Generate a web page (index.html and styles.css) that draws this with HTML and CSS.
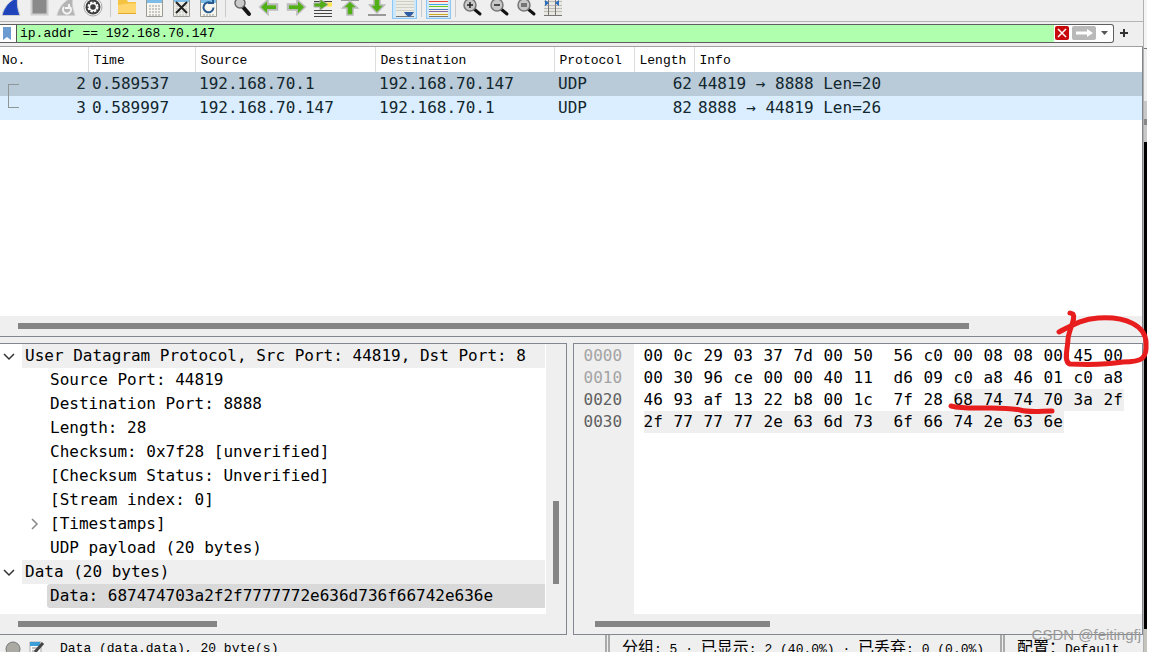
FILE: index.html
```html
<!DOCTYPE html>
<html lang="zh-CN">
<head>
<meta charset="utf-8">
<title>Wireshark</title>
<link rel="stylesheet" href="styles.css">
</head>
<body>
<div class="screen">
<main class="app">
  <div class="toolbar" role="toolbar" aria-label="Main toolbar">
    <button class="tool" aria-label="Start capture"><svg viewBox="0 0 25 21"><path d="M2 15.500C4 7 9 1 18 -3Q16 5 20 15.500Z" fill="#2148c0" stroke="#d0d0d0"/><path d="M4 14C7 7 10 4 15 1Q15 8 17 14Z" fill="#1f43b8"/></svg></button>
    <button class="tool" aria-label="Stop capture"><svg viewBox="0 0 25 21"><path d="M4.500 -2h16v16.500h-16z" fill="#8a8a8a" stroke="#cfcfcf" stroke-width="2"/></svg></button>
    <button class="tool" aria-label="Restart capture"><svg viewBox="0 0 25 21"><path d="M3 15.500C5 7 10 1 19 -3Q17 5 21 15.500Z" fill="#b5b5b5" stroke="#d2d2d2"/><path d="M10 7a4 4 0 1 0 6 0M15 4v4h-4" fill="none" stroke="#f5f5f5" stroke-width="2"/></svg></button>
    <button class="tool" aria-label="Capture options"><svg viewBox="0 0 25 21"><circle cx="12" cy="7" r="9" fill="#f4f4f4" stroke="#aaa"/><circle cx="12" cy="7" r="7.500" fill="#3c3c3c"/><circle cx="12" cy="7" r="4.500" fill="none" stroke="#fff" stroke-width="2" stroke-dasharray="2.300 1.250"/><circle cx="12" cy="7" r="3.500" fill="#3c3c3c" stroke="#fff" stroke-width="1.500"/></svg></button>
    <span class="sep"></span>
    <button class="tool" aria-label="Open file"><svg viewBox="0 0 25 21"><path d="M3 -2h8l2 4h8v11.500H3z" fill="#f5c342"/><path d="M3 5l10-1.500h8v10H3z" fill="#ffd66d"/><path d="M3 13.500h18" stroke="#e4ac2d"/></svg></button>
    <button class="tool" aria-label="Save file"><svg viewBox="0 0 25 21"><path d="M4.500-2h16v18.500h-16z" fill="#f7f7ef" stroke="#9a9a94"/><path d="M5 0h15v3H5z" fill="#7dbde8"/><path d="M7 6h12M7 9h12M7 12h12M7 15h12" stroke="#999" stroke-dasharray="2 1"/></svg></button>
    <button class="tool" aria-label="Close file"><svg viewBox="0 0 25 21"><path d="M4.500-2h16v18.500h-16z" fill="#ecece4" stroke="#9a9a94"/><path d="M5 0h15v2H5z" fill="#7dbde8"/><path d="M7 6h12M7 9h12M7 12h12M7 15h12" stroke="#bbb" stroke-dasharray="2 1"/><path d="M7 2l11 11M18 2L7 13" stroke="#222" stroke-width="2"/></svg></button>
    <button class="tool" aria-label="Reload file"><svg viewBox="0 0 25 21"><path d="M4.500-2h16v18.500h-16z" fill="#f7f7ef" stroke="#9a9a94"/><path d="M5 0h15v3H5z" fill="#7dbde8"/><path d="M7 15h12" stroke="#999" stroke-dasharray="2 1"/><path d="M15 3a5 5 0 1 0 2.500 4.500M12 3h5v-3" fill="none" stroke="#28598f" stroke-width="2"/></svg></button>
    <span class="sep"></span>
    <button class="tool" aria-label="Find packet"><svg viewBox="0 0 25 21"><path d="M13 7l6 7" stroke="#161616" stroke-width="4" stroke-linecap="round"/><circle cx="10" cy="3" r="5" fill="#cacaca" stroke="#686868" stroke-width="1.500"/></svg></button>
    <button class="tool" aria-label="Previous packet"><svg viewBox="0 0 25 21"><path d="M3.500 7l7-6.500v4H20v5h-9.500v4z" fill="#53ae17" stroke="#bbb" stroke-width="2.500"/><path d="M4 7l6-5.500v4H19v3.500h-9v4z" fill="#51b015"/></svg></button>
    <button class="tool" aria-label="Next packet"><svg viewBox="0 0 25 21"><path d="M20.500 7l-7-6.500v4H4v5h9.500v4z" fill="#53ae17" stroke="#bbb" stroke-width="2.500"/><path d="M20 7l-6-5.500v4H5v3.500h9v4z" fill="#51b015"/></svg></button>
    <button class="tool" aria-label="Go to packet"><svg viewBox="0 0 25 21"><path d="M3 1.500h18M3 10.500h18M3 13.500h18M3 16.500h18" stroke="#444"/><path d="M13 2.500h8v4h-8z" fill="#ffe34c"/><path d="M3 3h6V-1l8 5.500-8 5.500V7H3z" fill="#53ae17" stroke="#aaa"/></svg></button>
    <button class="tool" aria-label="First packet"><svg viewBox="0 0 25 21"><path d="M3 .500h18" stroke="#999"/><path d="M12 1L4.500 8H9v7h6V8h4.500z" fill="#51b015" stroke="#bbb" stroke-width="1.500"/></svg></button>
    <button class="tool" aria-label="Last packet"><svg viewBox="0 0 25 21"><path d="M3 15h18" stroke="#999" stroke-width="2"/><path d="M12 13L4.500 5H9V-1h6v6h4.500z" fill="#51b015" stroke="#bbb" stroke-width="1.500"/></svg></button>
    <button class="tool on" aria-label="Auto scroll"><svg viewBox="0 0 25 21"><path d="M4 0h18v17H4z" fill="#ecece6"/><path d="M4 1.500h18M4 4.500h18M4 7.500h18M4 10.500h18" stroke="#cfcfc6"/><path d="M4 16.500h18" stroke="#777"/><path d="M12 12h10q-2 4-5 5-3-1-5-5z" fill="#2d5da5"/></svg></button>
    <span class="sep"></span>
    <button class="tool on" aria-label="Colorize"><svg viewBox="0 0 25 21"><path d="M3 0h19v17H3z" fill="#f1f1e8"/><path d="M3 1.500h19" stroke="#ef4545"/><path d="M3 4.500h19" stroke="#3da5e7"/><path d="M3 6.500h19" stroke="#63c928"/><path d="M3 9.500h19" stroke="#4c79be"/><path d="M3 11.500h19" stroke="#8c64a0"/><path d="M3 14.500h19" stroke="#d1a61f"/><path d="M3 16.500h19" stroke="#777"/></svg></button>
    <span class="sep"></span>
    <button class="tool" aria-label="Zoom in"><svg viewBox="0 0 25 21"><path d="M14 9l6 5" stroke="#111" stroke-width="3" stroke-linecap="round"/><circle cx="10" cy="5" r="6" fill="#c8c8c8" stroke="#777" stroke-width="1.500"/><path d="M7 5h6M10 2v6" stroke="#222" stroke-width="1.500"/></svg></button>
    <button class="tool" aria-label="Zoom out"><svg viewBox="0 0 25 21"><path d="M14 9l6 5" stroke="#111" stroke-width="3" stroke-linecap="round"/><circle cx="10" cy="5" r="6" fill="#c8c8c8" stroke="#777" stroke-width="1.500"/><path d="M7 5h6" stroke="#222" stroke-width="1.500"/></svg></button>
    <button class="tool" aria-label="Normal size"><svg viewBox="0 0 25 21"><path d="M14 9l6 5" stroke="#111" stroke-width="3" stroke-linecap="round"/><circle cx="10" cy="5" r="6" fill="#c8c8c8" stroke="#777" stroke-width="1.500"/><path d="M7 4h6M7 6h6" stroke="#222" stroke-width="1.200"/></svg></button>
    <button class="tool" aria-label="Resize columns"><svg viewBox="0 0 25 21"><path d="M3 0h18v16H3z" fill="#e8e8e0"/><path d="M3 1.500h18M3 5.500h18M3 8.500h18M3 11.500h18" stroke="#bbb"/><path d="M3 15.500h18M7.500 0v15M14.500 0v15" stroke="#777"/><path d="M4 0l4 3-4 3zM18 0l-4 3 4 3z" fill="#286bc0"/></svg></button>
  </div>

  <form class="filter">
    <div class="filter-box">
      <button class="mark" type="button" aria-label="Bookmarks"><svg viewBox="0 0 16 17"><path d="M3 2h8v13l-4-3-4 3z" fill="#6b9bd1"/></svg></button>
      <input class="filter-input" type="text" aria-label="Display filter" value="ip.addr == 192.168.70.147" spellcheck="false">
      <button class="clear" type="button" aria-label="Clear filter"><svg viewBox="0 0 14 14"><path d="M3 3l8 8M11 3l-8 8" stroke="#fff" stroke-width="1.500"/></svg></button>
      <button class="apply" type="button" aria-label="Apply filter"><svg viewBox="0 0 24 14"><path d="M4 5.500h11V3l6 4-6 4V8.500H4z" fill="#fff"/></svg></button>
      <button class="drop" type="button" aria-label="Recent filters"><svg viewBox="0 0 17 14"><path d="M5 5h7l-3.500 4z" fill="#555"/></svg></button>
    </div>
    <button class="add" type="button" aria-label="Add filter button"><svg viewBox="0 0 10 10"><path d="M5 1v8M1 5h8" stroke="#333" stroke-width="2"/></svg></button>
  </form>

  <section class="work">
    <div class="packets">
      <div class="list">
        <table class="table">
          <colgroup><col class="c-no"><col class="c-time"><col class="c-addr"><col class="c-addr"><col class="c-proto"><col class="c-len"><col></colgroup>
          <thead><tr><th>No.</th><th>Time</th><th>Source</th><th>Destination</th><th>Protocol</th><th>Length</th><th>Info</th></tr></thead>
          <tbody>
            <tr class="row-sel"><td><div class="no"><span class="link first"></span>2</div></td><td>0.589537</td><td>192.168.70.1</td><td>192.168.70.147</td><td>UDP</td><td class="num">62</td><td>44819 → 8888 Len=20</td></tr>
            <tr class="row-udp"><td><div class="no"><span class="link last"></span>3</div></td><td>0.589997</td><td>192.168.70.147</td><td>192.168.70.1</td><td>UDP</td><td class="num">82</td><td>8888 → 44819 Len=26</td></tr>
          </tbody>
        </table>
      </div>
      <div class="hbar"><span class="thumb wide"></span></div>
    </div>

    <div class="panes">
      <div class="pane details">
        <div class="details-body">
          <ul class="tree">
            <li class="branch"><svg class="chev" viewBox="0 0 22 24"><path d="M4 10l5 5 5-5" fill="none" stroke="#333" stroke-width="1.500"/></svg><span class="label shade">User Datagram Protocol, Src Port: 44819, Dst Port: 8</span></li>
            <li class="leaf">Source Port: 44819</li>
            <li class="leaf">Destination Port: 8888</li>
            <li class="leaf">Length: 28</li>
            <li class="leaf">Checksum: 0x7f28 [unverified]</li>
            <li class="leaf">[Checksum Status: Unverified]</li>
            <li class="leaf">[Stream index: 0]</li>
            <li class="branch sub"><svg class="chev" viewBox="0 0 22 24"><path d="M7 7l5 5-5 5" fill="none" stroke="#888" stroke-width="1.500"/></svg><span class="label">[Timestamps]</span></li>
            <li class="leaf">UDP payload (20 bytes)</li>
            <li class="branch"><svg class="chev" viewBox="0 0 22 24"><path d="M4 10l5 5 5-5" fill="none" stroke="#333" stroke-width="1.500"/></svg><span class="label shade">Data (20 bytes)</span></li>
            <li class="leaf"><span class="picked">Data: 687474703a2f2f7777772e636d736f66742e636e</span></li>
          </ul>
          <div class="vbar"><span class="vthumb"></span></div>
        </div>
        <div class="hbar"><span class="thumb short"></span></div>
      </div>

      <div class="pane bytes">
        <div class="bytes-body">
          <div class="offsets"><span>0000</span><span>0010</span><span class="dark">0020</span><span class="dark">0030</span></div>
          <div class="hex">
            <span>00</span><span>0c</span><span>29</span><span>03</span><span>37</span><span>7d</span><span>00</span><span>50</span><span>56</span><span>c0</span><span>00</span><span>08</span><span>08</span><span>00</span><span>45</span><span>00</span>
            <span>00</span><span>30</span><span>96</span><span>ce</span><span>00</span><span>00</span><span>40</span><span>11</span><span>d6</span><span>09</span><span>c0</span><span>a8</span><span>46</span><span>01</span><span>c0</span><span>a8</span>
            <span>46</span><span>93</span><span>af</span><span>13</span><span>22</span><span>b8</span><span>00</span><span>1c</span><span>7f</span><span>28</span><span class="hl">68</span><span class="hl">74</span><span class="hl">74</span><span class="hl">70</span><span class="hl">3a</span><span class="hl end">2f</span>
            <span class="hl">2f</span><span class="hl">77</span><span class="hl">77</span><span class="hl">77</span><span class="hl">2e</span><span class="hl">63</span><span class="hl">6d</span><span class="hl">73</span><span class="hl">6f</span><span class="hl">66</span><span class="hl">74</span><span class="hl">2e</span><span class="hl">63</span><span class="hl end">6e</span>
          </div>
        </div>
        <div class="hbar"><span class="thumb mid"></span></div>
        <svg class="ink" viewBox="0 0 204 110" aria-hidden="true"><path d="M113 20C125 14 135 7 152 6C180 4 200 14 200 31C201 46 197 50 177 50C158 53 145 53 124 52C117 50 122 35 122 27C123 17 130 7 127 2L124 1" /><path d="M5 94C25 99 48 93 74 98C85 101 95 99 106 99"/></svg>
      </div>
    </div>
  </section>

  <footer class="status">
    <div class="status-left">
      <svg class="dot" viewBox="0 0 16 16"><circle cx="8" cy="8" r="7" fill="#aaa9a2" stroke="#777"/></svg>
      <svg class="note" viewBox="0 0 16 16"><path d="M1 1h11v15H1z" fill="#fafafa" stroke="#aaa"/><path d="M1 1h10v4H1z" fill="#3c9ed8"/><path d="M3 7h5M3 10h3" stroke="#888"/><path d="M14 2L6 11" stroke="#444" stroke-width="3"/></svg>
      <span>Data (data.data), 20 byte(s)</span>
    </div>
    <div class="status-mid"><span class="han">分组</span>: 5 · <span class="han">已显示</span>: 2 (40.0%) · <span class="han">已丢弃</span>: 0 (0.0%)</div>
    <div class="status-right"><span class="han">配置：</span>Default</div>
  </footer>
</main>
<div class="behind"><span class="behind-top"></span><span class="behind-mid"></span><span class="behind-black"></span><span class="behind-end"></span></div>
<div class="watermark">CSDN @feitingfj</div>
</div>
</body>
</html>
```
FILE: styles.css
```css
* { box-sizing: border-box; }

body {
  margin: 0;
  background: #fff;
  color: #000;
  font-family: "Liberation Mono", "Noto Sans CJK SC", monospace;
  font-size: 13px;
}

button { padding: 0; border: 0; background: none; }
svg { display: block; }

.screen {
  position: relative;
  display: flex;
  height: 100vh;
  padding-right: 4px;
  overflow: hidden;
}

.app {
  display: flex;
  flex: 1;
  flex-direction: column;
  min-width: 0;
  background: #efefef;
}

/* Toolbar */
.toolbar {
  display: flex;
  gap: 2px;
  height: 22px;
  border-bottom: 1px solid #b4b4b4;
}
.tool { width: 25px; height: 19px; overflow: hidden; }
.tool svg { width: 25px; height: 21px; }
.tool.on { background: #cce6fa; border: 1px solid #8cc8f5; border-top: 0; }
.tool.on svg { margin-left: -1px; }
.sep { width: 5px; height: 17px; margin-right: 2px; margin-left: -2px; border-right: 1px solid #cacaca; }

/* Display filter */
.filter {
  display: flex;
  align-items: center;
  height: 25px;
  padding-bottom: 2px;
  border-bottom: 1px solid #a0a0a0;
}
.filter-box {
  display: flex;
  flex: 1;
  align-items: center;
  height: 19px;
  border: 1px solid #5f5f5f;
  border-left: 0;
  border-radius: 0 3px 3px 0;
  background: #fff;
}
.mark { width: 17px; height: 17px; border-right: 1px solid #555; }
.mark svg { width: 16px; height: 17px; }
.filter-input {
  flex: 1;
  min-width: 0;
  height: 17px;
  padding: 0 3px;
  border: 0;
  background: #afffaf;
  color: #000;
  font: 13px "Liberation Mono", monospace;
}
.clear { width: 14px; height: 14px; margin-left: 1px; border-radius: 2px; background: #c80a0a; }
.apply { width: 24px; height: 14px; margin-left: 3px; border-radius: 2px; background: #b9b9b9; }
.drop { width: 17px; height: 14px; }
.add { width: 29px; padding-left: 1px; }
.add svg { width: 10px; height: 10px; }
.filter { gap: 4px; }

/* Work area */
.work { display: flex; flex: 1; flex-direction: column; gap: 6px; min-height: 0; margin-right: 4px; }
.packets {
  display: flex;
  flex: 290 1 0;
  flex-direction: column;
  min-height: 0;
  border-right: 1px solid #828790;
  border-bottom: 1px solid #828790;
}
.list { flex: 1; overflow: hidden; background: #fff; }

.table { width: 100%; border-collapse: collapse; table-layout: fixed; }
.c-no { width: 88px; }
.c-time { width: 107px; }
.c-addr { width: 180px; }
.c-addr + .c-addr { width: 179px; }
.c-proto { width: 80px; }
.c-len { width: 60px; }
.table th {
  height: 25px;
  padding: 2px 0 0 5px;
  border-left: 1px solid #dcdcdc;
  font-weight: 400;
  text-align: left;
}
.table th:first-child { padding-left: 2px; border-left: 0; }
.table td {
  height: 24px;
  padding: 0 2px 0 4px;
  color: #12272e;
  line-height: 24px;
  white-space: nowrap;
}
.table td, .tree, .bytes-body {
  font-family: "DejaVu Sans Mono", monospace;
  font-size: 16px;
}
.table .num { text-align: right; }
.row-sel { background: #b9cad8; }
.row-udp { background: #daeeff; }
.no { display: flex; justify-content: space-between; height: 24px; padding-left: 4px; }
.link { width: 11px; height: 12px; border-left: 1px solid #8e9698; }
.first { align-self: flex-end; border-top: 1px solid #8e9698; }
.last { border-bottom: 1px solid #8e9698; }

/* Scroll bars */
.hbar { flex: none; height: 20px; padding: 7px 18px; background: #efefef; }
.thumb { display: block; height: 6px; background: #858585; }
.wide { width: 86%; }
.short { width: 199px; }
.mid { width: 175px; margin-left: 3px; }
.vbar { display: flex; flex-direction: column; justify-content: flex-end; width: 20px; padding: 0 7px 30px; background: #efefef; }
.vthumb { height: 83px; background: #858585; }

/* Lower panes */
.panes { display: flex; flex: 293 1 0; gap: 6px; min-height: 0; }
.pane { display: flex; flex-direction: column; min-width: 0; border: 1px solid #828790; }
.details { flex: 567 1 0; border-left: 0; }
.bytes { position: relative; flex: 570 1 0; }
.details-body { display: flex; flex: 1; min-height: 0; background: #fff; }
.tree {
  flex: 1;
  min-width: 0;
  margin: 0 1px 0 0;
  padding: 0;
  overflow: hidden;
  line-height: 24px;
  list-style: none;
  white-space: nowrap;
}
.branch { display: flex; }
.chev { flex: none; width: 22px; height: 24px; }
.sub { padding-left: 25px; }
.label { flex: 1; padding-left: 3px; overflow: hidden; }
.shade { background: #efefef; }
.leaf { padding-left: 47px; text-indent: 3px; }
.picked { display: block; border-radius: 3px 0 0 3px; background: #d9d9d9; }

.bytes-body { display: flex; flex: 1; min-height: 0; background: #fff; line-height: 22px; }
.offsets {
  display: flex;
  flex-direction: column;
  width: 60px;
  padding: 1px 0 0 10px;
  background: #efefef;
  color: #a3a3a3;
}
.dark { color: #606060; }
.hex {
  display: grid;
  grid-template-columns: repeat(7, 30px) 40px repeat(8, 30px);
  align-content: start;
  padding: 1px 0 0 10px;
}
.hl { background: #efefef; }
.end { width: 20px; }
.ink {
  position: absolute;
  z-index: 2;
  top: -32px;
  right: -8px;
  width: 204px;
  height: 110px;
  overflow: visible;
  fill: none;
  stroke: #e81e1e;
  stroke-width: 5;
  stroke-linecap: round;
  stroke-linejoin: round;
}

/* Status bar */
.status {
  display: grid;
  flex: none;
  grid-template-columns: 605fr 395fr 147fr;
  height: 17px;
  overflow: hidden;
  line-height: 16px;
  white-space: nowrap;
}
.status > div { padding-top: 6px; }
.status-left { display: flex; }
.dot { width: 16px; height: 16px; margin: 0 8px 0 5px; }
.note { width: 16px; height: 16px; margin-right: 15px; }
.status .status-mid, .status .status-right { border-left: 5px double #aaa; padding-left: 12px; }
.han { font-size: 16px; }

/* Sliver of the window behind */
.behind {
  position: absolute;
  top: 0;
  right: 4px;
  bottom: 0;
  display: flex;
  flex-direction: column;
  width: 4px;
  border-left: 1px solid #b0b0b0;
}
.behind-top { height: 49px; background: #f4f4f4; border-bottom: 1px solid #777; }
.behind-mid { height: 93px; background: linear-gradient(#eee 0 52px, #c8c8c8 52px 70px, #888 70px 76px, #c8c8c8 76px); }
.behind-black { flex: 1; background: #000; }
.behind-end { height: 23px; background: #c5c5be; }
.watermark {
  position: absolute;
  right: 10px;
  bottom: 8px;
  color: #999;
  font: 15px/18px "Liberation Sans", sans-serif;
}
```
